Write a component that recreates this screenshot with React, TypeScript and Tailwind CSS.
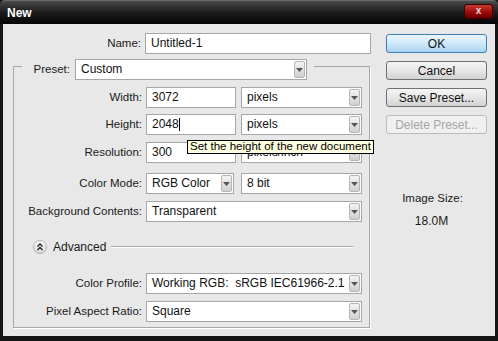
import React from 'react';

const font = { fontFamily: '"Liberation Sans", Arial, sans-serif' };

const Arrow: React.FC = () => (
  <div className="w-[11px] self-stretch my-[1px] mr-[1px] border border-[#b5b5b5] rounded-[2px] bg-gradient-to-b from-[#f4f4f4] to-[#cfcfcf] flex items-center justify-center">
    <svg width="7" height="4" viewBox="0 0 7 4">
      <path d="M0 0 L7 0 L3.5 4 Z" fill="#555" />
    </svg>
  </div>
);

const Select: React.FC<{ value: string; className?: string }> = ({ value, className }) => (
  <div className={`h-[21px] bg-white border border-[#a6a6a6] flex items-stretch ${className || ''}`}>
    <span className="flex-1 pl-[5px] text-[12px] leading-[19px] text-[#111] whitespace-pre overflow-hidden">{value}</span>
    <Arrow />
  </div>
);

const Field: React.FC<{ value: string; className?: string; caret?: boolean }> = ({ value, className, caret }) => (
  <div className={`h-[21px] bg-white border border-[#a6a6a6] flex items-center pl-[5px] ${className || ''}`}>
    <span className="text-[12px] leading-[19px] text-[#111]">{value}</span>
    {caret && <span className="w-px h-[13px] bg-black" />}
  </div>
);

const Label: React.FC<{ children: React.ReactNode }> = ({ children }) => (
  <span className="w-[128px] mr-[4px] text-right text-[11.5px] text-[#1a1a1a] whitespace-nowrap">{children}</span>
);

const Button: React.FC<{ label: string; primary?: boolean; disabled?: boolean }> = ({ label, primary, disabled }) => {
  let cls = 'border-[#707070] bg-gradient-to-b from-[#f5f5f5] via-[#e6e6e6] to-[#d2d2d2] text-[#111]';
  if (primary) cls = 'border-[#3c7fb1] bg-gradient-to-b from-[#eaf6fd] via-[#cfe8f8] to-[#a9d4f2] text-[#111]';
  if (disabled) cls = 'border-[#bcbcbc] bg-[#f0f0f0] text-[#a6a6a6]';
  return (
    <div className={`h-[19px] rounded-[3px] border flex items-center justify-center text-[12px] ${cls}`}>
      {label}
    </div>
  );
};

export default function App() {
  return (
    <div style={font} className="w-[498px] h-[341px] bg-[#161616] flex flex-col overflow-hidden">
      {/* Title bar */}
      <div className="h-[24px] shrink-0 flex items-center justify-between pl-[7px] pr-[5px] bg-gradient-to-b from-[#4a4a4a] via-[#1c1c1c] to-[#050505] border-t border-[#6a6a6a] rounded-t-[5px]">
        <span className="text-white font-bold text-[12px]">New</span>
        <div className="w-[29px] h-[15px] -mt-[3px] rounded-[3px] border border-[#3a0000] bg-gradient-to-b from-[#c83a2e] via-[#a00c0c] to-[#6e0000] flex items-center justify-center">
          <span className="text-[#f0d0d0] text-[10px] leading-none font-bold">x</span>
        </div>
      </div>

      {/* Body */}
      <div className="relative flex-1 mx-[3px] mb-[5px] bg-[#e8e8e8] flex">
        {/* Left column */}
        <div className="w-[370px] pl-[10px] pt-[9px]">
          <div className="flex items-center">
            <Label>Name:</Label>
            <Field value="Untitled-1" className="w-[226px]" />
          </div>

          {/* Group box */}
          <div className="mt-[12px] w-[357px] h-[262px] border border-[#a7a7a7] shadow-[1px_1px_0_#fff]">
            <div className="-mt-[8px] flex items-center">
              <span className="ml-[8px] w-[53px] pr-[5px] text-right text-[11.5px] text-[#1a1a1a] bg-[#e8e8e8] leading-[21px]">Preset:</span>
              <Select value="Custom" className="w-[232px]" />
              <span className="w-[7px] h-[21px] bg-[#e8e8e8]" />
            </div>

            <div className="mt-[7px] flex items-center">
              <Label>Width:</Label>
              <Field value="3072" className="w-[90px]" />
              <Select value="pixels" className="w-[121px] ml-[5px]" />
            </div>
            <div className="mt-[6px] flex items-center">
              <Label>Height:</Label>
              <Field value="2048" caret className="w-[90px]" />
              <Select value="pixels" className="w-[121px] ml-[5px]" />
            </div>
            <div className="mt-[7px] flex items-center">
              <Label>Resolution:</Label>
              <Field value="300" className="w-[90px]" />
              <Select value="pixels/inch" className="w-[121px] ml-[5px]" />
            </div>
            <div className="mt-[10px] flex items-center">
              <Label>Color Mode:</Label>
              <Select value="RGB Color" className="w-[88px]" />
              <Select value="8 bit" className="w-[121px] ml-[7px]" />
            </div>
            <div className="mt-[7px] flex items-center">
              <Label>Background Contents:</Label>
              <Select value="Transparent" className="w-[216px]" />
            </div>

            <div className="mt-[17px] h-[16px] flex items-center ml-[19px] mr-[16px]">
              <div className="w-[14px] h-[14px] rounded-full border border-[#b0b0b0] bg-gradient-to-b from-[#fafafa] to-[#d8d8d8] flex items-center justify-center">
                <svg width="8" height="8" viewBox="0 0 8 8" fill="none" stroke="#222" strokeWidth="1.3">
                  <path d="M1.5 3.5 L4 1 L6.5 3.5" />
                  <path d="M1.5 7 L4 4.5 L6.5 7" />
                </svg>
              </div>
              <span className="ml-[6px] text-[12px] text-[#1a1a1a]">Advanced</span>
              <div className="ml-[5px] flex-1 h-[2px] border-t border-[#a7a7a7] border-b-white border-b" />
            </div>

            <div className="mt-[18px] flex items-center">
              <Label>Color Profile:</Label>
              <Select value="Working RGB:  sRGB IEC61966-2.1" className="w-[216px]" />
            </div>
            <div className="mt-[7px] flex items-center">
              <Label>Pixel Aspect Ratio:</Label>
              <Select value="Square" className="w-[216px]" />
            </div>
          </div>
        </div>

        {/* Right column */}
        <div className="ml-[13px] w-[101px] pt-[10px] flex flex-col">
          <div className="flex flex-col gap-[8px]">
            <Button label="OK" primary />
            <Button label="Cancel" />
            <Button label="Save Preset..." />
            <Button label="Delete Preset..." disabled />
          </div>
          <div className="mt-[56px] pr-[8px] text-center text-[11.5px] leading-[16px] text-[#1a1a1a]">Image Size:</div>
          <div className="mt-[7px] pr-[10px] text-center text-[12px] leading-[16px] text-[#1a1a1a]">18.0M</div>
        </div>

        {/* Tooltip */}
        <div className="absolute left-[184px] top-[116px] h-[14px] px-[2px] bg-[#ffffe1] border border-black flex items-center">
          <span className="text-[11.5px] leading-none text-black whitespace-nowrap">Set the height of the new document</span>
        </div>
      </div>
    </div>
  );
}
